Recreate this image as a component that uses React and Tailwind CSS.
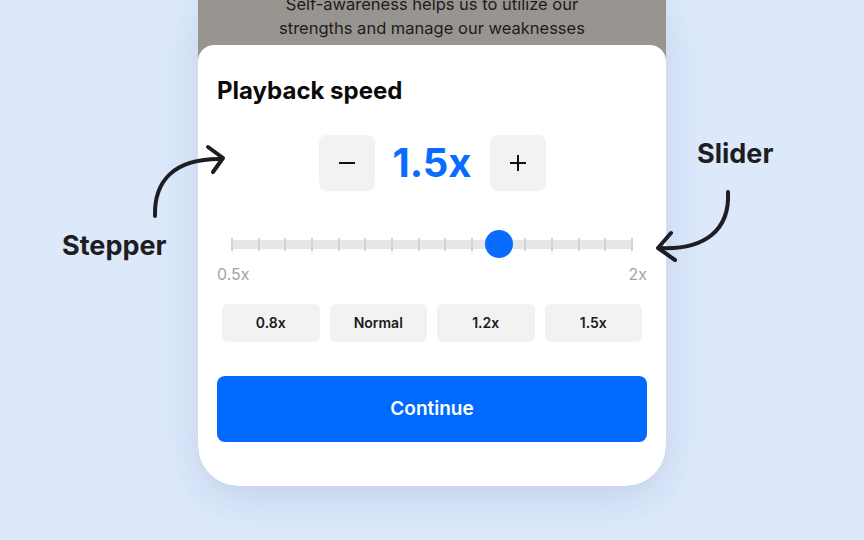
import React, { useState } from 'react';

const presets = ['0.8x', 'Normal', '1.2x', '1.5x'];

export default function App() {
  const [speed, setSpeed] = useState(1.5);
  const min = 0.5;
  const max = 2;
  const pct = ((speed - min) / (max - min)) * 100;
  const ticks = Array.from({ length: 16 });

  return (
    <div className="relative w-[864px] h-[540px] overflow-hidden bg-[#dde9fb] flex justify-center font-['Inter','Noto_Sans',sans-serif]">
      {/* phone */}
      <div className="w-[468px] h-[486px] flex flex-col bg-[#989490] rounded-b-[40px] overflow-hidden shadow-[0_12px_40px_rgba(70,100,160,0.18)]">
        <div className="h-[45px] shrink-0">
          <p className="-mt-2 text-center text-[16.5px] leading-6 text-[#1c1c1c]">
            Self-awareness helps us to utilize our
            <br />
            strengths and manage our weaknesses
          </p>
        </div>

        <div className="flex-1 bg-white rounded-t-2xl px-[19px] pt-[32px] flex flex-col">
          <h2 className="text-[24px] leading-7 font-bold text-[#0a0a0a]">Playback speed</h2>

          {/* stepper */}
          <div className="mt-[30px] flex items-center justify-center">
            <button
              onClick={() => setSpeed(Math.max(min, +(speed - 0.1).toFixed(1)))}
              className="w-14 h-14 rounded-lg bg-[#f2f2f2] flex items-center justify-center text-[#111]"
            >
              <svg width="16" height="2" viewBox="0 0 16 2"><rect width="16" height="2" fill="currentColor" /></svg>
            </button>
            <div className="w-[115px] text-center text-[40px] leading-none font-bold text-[#0a6cff]">{speed}x</div>
            <button
              onClick={() => setSpeed(Math.min(max, +(speed + 0.1).toFixed(1)))}
              className="w-14 h-14 rounded-lg bg-[#f2f2f2] flex items-center justify-center text-[#111]"
            >
              <svg width="16" height="16" viewBox="0 0 16 16">
                <rect x="7" width="2" height="16" fill="currentColor" />
                <rect y="7" width="16" height="2" fill="currentColor" />
              </svg>
            </button>
          </div>

          {/* slider */}
          <div className="mt-[39px] px-[14px]">
            <div className="relative h-7 flex items-center">
              <div className="w-full h-[9px] bg-[#e6e6e6] flex justify-between items-center">
                {ticks.map((_, i) => (
                  <div key={i} className="w-[2px] h-[13px] bg-[#d2d2d2]" />
                ))}
              </div>
              <div
                className="absolute top-0 w-7 h-7 -ml-[14px] rounded-full bg-[#0a6cff]"
                style={{ left: `${pct}%` }}
              />
            </div>
          </div>
          <div className="mt-[6px] flex justify-between text-[16px] leading-5 text-[#a3a3a3]">
            <span>0.5x</span>
            <span>2x</span>
          </div>

          {/* presets */}
          <div className="mt-5 px-[5px] grid grid-cols-4 gap-[10px]">
            {presets.map((p) => (
              <button
                key={p}
                className="h-[38px] rounded-md bg-[#f2f2f2] text-sm font-semibold text-[#1a1a1a]"
              >
                {p}
              </button>
            ))}
          </div>

          <button className="mt-[34px] h-[66px] rounded-lg bg-[#006aff] text-white text-[19px] font-semibold">
            Continue
          </button>
        </div>
      </div>

      {/* annotations */}
      <div className="absolute left-[62px] top-[232px] text-[27px] leading-[27px] font-bold text-[#1d1d22]">Stepper</div>
      <div className="absolute left-[697px] top-[140px] text-[27px] leading-[27px] font-bold text-[#1d1d22]">Slider</div>
      <svg className="absolute inset-0 pointer-events-none" width="864" height="540" viewBox="0 0 864 540" fill="none">
        <g stroke="#1d1d22" strokeWidth="4" strokeLinecap="round" strokeLinejoin="round">
          <path d="M155 216 C 154 180, 175 158, 222 159" />
          <path d="M208 147 L223 158 L213 172" />
          <path d="M728 192 C 730 230, 705 250, 660 248" />
          <path d="M671 233 L658 248 L675 260" />
        </g>
      </svg>
    </div>
  );
}
